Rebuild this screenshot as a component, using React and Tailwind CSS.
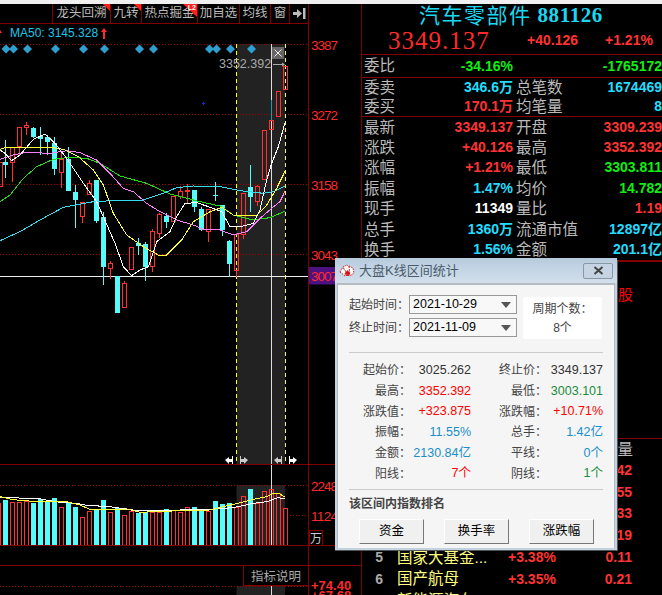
const Y = (v) => 120 + v / 3;
const VY = (v) => 440 + v / 3;
const RED = "#ff3232";
const CYAN = "#54fcfc";
const AXIS = "#ff2a2a";
const DARK = "#800000";

// [x, up, high, top, bottom, low] measured on a 3x grid
const candles = [
  [-1, 1, 125, 125, 197, 197],
  [16, 0, 60, 125, 135, 175],
  [37, 1, 80, 80, 125, 185],
  [58, 1, 22, 22, 80, 105],
  [79, 1, 5, 15, 22, 45],
  [100, 0, 22, 25, 52, 55],
  [121, 0, 20, 48, 58, 105],
  [142, 0, 45, 52, 65, 105],
  [163, 0, 50, 70, 147, 165],
  [184, 1, 100, 118, 158, 203],
  [205, 0, 80, 117, 212, 212],
  [226, 0, 195, 217, 240, 325],
  [247, 1, 245, 247, 290, 308],
  [268, 1, 180, 190, 224, 225],
  [289, 0, 180, 180, 302, 310],
  [310, 0, 275, 290, 440, 495],
  [331, 1, 422, 430, 446, 478],
  [352, 0, 467, 467, 578, 578],
  [373, 1, 483, 490, 562, 562],
  [394, 1, 380, 380, 445, 445],
  [415, 0, 355, 370, 378, 405],
  [436, 0, 365, 372, 440, 483],
  [457, 1, 328, 334, 440, 455],
  [478, 1, 280, 283, 340, 355],
  [499, 0, 280, 288, 305, 325],
  [520, 1, 228, 228, 303, 305],
  [541, 1, 198, 214, 228, 237],
  [562, 1, 192, 210, 212, 250],
  [583, 0, 210, 210, 262, 275],
  [604, 0, 262, 267, 330, 332],
  [625, 1, 268, 268, 335, 365],
  [646, 0, 186, 226, 228, 242],
  [667, 0, 256, 256, 330, 348],
  [688, 0, 360, 363, 432, 472],
  [709, 1, 340, 342, 450, 470],
  [730, 1, 220, 220, 343, 356],
  [751, 0, 135, 202, 230, 275],
  [772, 1, 195, 198, 242, 258],
  [793, 1, 30, 30, 177, 177],
  [814, 1, -60, 0, 28, 30],
  [835, 1, -87, -87, -13, -13],
  [856, 1, -162, -162, -93, -93],
];

const maLines = [
  ["#22dd11", "0,245 30,225 70,175 110,140 160,118 210,112 260,115 300,130 360,168 440,190 510,222 600,245 660,258 700,285 760,300 810,293 856,273"],
  ["#33ddf0", "0,362 60,335 120,300 190,262 280,245 340,242 430,240 490,220 530,203 580,198 660,200 720,212 790,220 820,215 856,198"],
  ["#ff80ff", "0,118 40,105 80,97 150,100 200,92 240,98 290,120 330,160 370,205 400,215 440,250 480,275 530,300 580,315 610,328 660,330 700,345 740,335 780,295 815,265 840,245 856,212"],
  ["#ffff33", "0,88 20,82 150,82 190,88 235,110 280,150 310,195 340,280 380,345 430,380 475,405 500,405 545,360 580,305 630,275 665,262 700,285 770,287 800,255 830,205 856,152"],
  ["#ffffff", "0,90 15,100 35,122 60,105 100,58 135,42 165,70 200,115 250,190 290,245 310,290 345,370 370,440 395,467 420,450 445,440 470,365 510,335 530,290 555,250 590,248 640,265 665,275 690,320 720,320 760,310 780,270 800,180 815,130 835,80 856,5"],
];

// [x, up, top]
const volumes = [
  [-5, 1, 190], [16, 0, 180], [37, 1, 187], [58, 1, 187], [79, 1, 182], [100, 0, 190], [121, 0, 178],
  [142, 0, 183], [163, 0, 175], [184, 1, 202], [205, 0, 185], [226, 0, 200], [247, 1, 232], [268, 1, 213],
  [289, 0, 207], [310, 0, 180], [331, 1, 216], [352, 0, 205], [373, 1, 226], [394, 1, 213], [415, 0, 218],
  [436, 0, 215], [457, 1, 215], [478, 1, 215], [499, 0, 207], [520, 1, 209], [541, 1, 217], [562, 1, 202],
  [583, 0, 201], [604, 0, 210], [625, 1, 212], [646, 0, 183], [667, 0, 192], [688, 0, 189], [709, 1, 202],
  [730, 1, 169], [751, 0, 147], [772, 1, 190], [793, 1, 154], [814, 1, 148], [835, 1, 160], [856, 1, 205],
];

const diamonds = [6, 13.5, 27.5, 55.5, 83.5, 104.5, 139.5, 153.5, 209.5, 216.5, 230.5, 251.5];

const toPoints = (str, f) =>
  str.split(" ").map((p) => {
    const [x, y] = p.split(",").map(Number);
    return `${x / 3},${f(y)}`;
  }).join(" ");

function Chart() {
  return (
    <svg width="361" height="571" viewBox="0 24 361 571" className="block">
      <rect x="236.5" y="44" width="48.5" height="420" fill="#222222" />
      <rect x="236.5" y="485" width="48.5" height="60" fill="#222222" />
      <rect x="236.5" y="586" width="48.5" height="9" fill="#222222" />

      {[44.5, 114.5, 184.5, 254.5, 485.5, 586.5].map((y) => (
        <line key={y} x1="0" x2="308" y1={y} y2={y} stroke="#aa0000" strokeDasharray="1 2" />
      ))}
      <line x1="290" x2="308" y1="515.5" y2="515.5" stroke="#aa0000" strokeDasharray="1 2" />

      <line x1="236.5" x2="236.5" y1="44" y2="464" stroke="#ffff33" strokeDasharray="4 3" />
      <line x1="285.5" x2="285.5" y1="44" y2="464" stroke="#ffff33" strokeDasharray="4 3" />
      <line x1="271.5" x2="271.5" y1="44" y2="545" stroke="#dddddd" />
      <line x1="271.5" x2="271.5" y1="586" y2="595" stroke="#dddddd" />
      <line x1="0" x2="308" y1="276.5" y2="276.5" stroke="#eeeeee" />

      <g shapeRendering="crispEdges">
        {candles.map(([x, up, high, top, bot, low]) => {
          const cx = Math.round(x / 3) + 0.5;
          const color = up ? RED : CYAN;
          return (
            <g key={x}>
              {high < top && <line x1={cx} x2={cx} y1={Y(high)} y2={Y(top)} stroke={x === 814 ? "#1f9aa8" : color} />}
              {low > bot && <line x1={cx} x2={cx} y1={Y(bot)} y2={Y(low)} stroke={x === 814 ? "#1f9aa8" : color} />}
              {up ? (
                <rect x={cx - 2} y={Math.round(Y(top)) + 0.5} width="4" height={Math.max(1, Math.round((bot - top) / 3))} fill="none" stroke={RED} />
              ) : (
                <rect x={cx - 2.5} y={Y(top)} width="5" height={(bot - top) / 3} fill={CYAN} />
              )}
            </g>
          );
        })}
      </g>

      {maLines.map(([color, pts]) => (
        <polyline key={color} points={toPoints(pts, Y)} fill="none" stroke={color} strokeWidth="1" shapeRendering="crispEdges" />
      ))}

      {diamonds.map((x) => (
        <polygon key={x} points={`${x - 4.5},49 ${x},44.5 ${x + 4.5},49 ${x},53.5`} fill="#2f9fd0" />
      ))}
      <path d="M203.5 102v3M202 103.5h3" stroke="#2222cc" />

      <text x="10" y="37" fontSize="12" fill="#19c8e8">MA50: 3145.328</text>
      <path d="M104 28l-3 4h2v7h2v-7h2z" fill="#ff2a2a" />
      <path d="M0 30l2 3h-2z" fill="#ff2a2a" />

      <text x="219" y="68" fontSize="12.5" fill="#aaaaaa">3352.392</text>
      <path d="M273 64.5h9" stroke="#aaaaaa" />
      <path d="M282 62.5l3 2-3 2z" fill="#aaaaaa" />
      <rect x="272" y="47" width="12" height="12" fill="#666666" />
      <path d="M274.5 49.5l7 7M281.5 49.5l-7 7" stroke="#eeeeee" />

      {[["3387", 50], ["3272", 120], ["3158", 190], ["3043", 260]].map(([t, y]) => (
        <text key={t} x="311" y={y} fontSize="13.5" fill={AXIS} textLength="27">{t}</text>
      ))}
      <rect x="309" y="267" width="30" height="17.5" fill="#4b1280" />
      <text x="311" y="281" fontSize="13.5" fill={AXIS} textLength="27">3007</text>

      <g fill="#ffffff">
        <path d="M225 460l4-3v2h3v-3h1v9h-1v-3h-3v2z" />
        <path d="M248 460l-4-3v2h-3v-3h-1v9h1v-3h3v2z" fill="#cccccc" />
        <path d="M274 460l4-3v2h3v-3h1v9h-1v-3h-3v2z" fill="#cccccc" />
        <path d="M297 460l-4-3v2h-3v-3h-1v9h1v-3h3v2z" />
      </g>

      <g shapeRendering="crispEdges">
        {volumes.map(([x, up, top]) => {
          const cx = Math.round(x / 3) + 0.5;
          return up ? (
            <rect key={x} x={cx - 2} y={Math.round(VY(top)) + 0.5} width="4" height={545 - Math.round(VY(top))} fill="none" stroke={RED} />
          ) : (
            <rect key={x} x={cx - 2.5} y={VY(top)} width="5" height={545 - VY(top)} fill={CYAN} />
          );
        })}
      </g>
      <polyline
        points={toPoints("0,173 110,175 180,187 230,190 260,196 330,200 400,210 450,212 630,208 700,203 760,190 800,185 835,173 856,177", VY)}
        fill="none" stroke="#ffffff" shapeRendering="crispEdges"
      />
      <polyline
        points={toPoints("0,170 40,179 110,185 200,185 240,195 270,208 330,210 380,207 420,217 480,214 630,210 700,193 760,178 800,170 820,160 840,162 856,172", VY)}
        fill="none" stroke="#ffff33" shapeRendering="crispEdges"
      />

      <line x1="308.5" x2="308.5" y1="24" y2="595" stroke={DARK} />
      <line x1="0" x2="361" y1="464.5" y2="464.5" stroke={DARK} />
      <line x1="0" x2="361" y1="545.5" y2="545.5" stroke={DARK} />
      <line x1="0" x2="361" y1="565.5" y2="565.5" stroke={DARK} />

      <text x="311" y="491" fontSize="13.5" fill={AXIS} textLength="27">2248</text>
      <text x="311" y="521" fontSize="13.5" fill={AXIS} textLength="27">1124</text>
      <rect x="309.5" y="530.5" width="13" height="15" fill="none" stroke={DARK} />
      <text x="310" y="543" fontSize="12" fill="#cccccc">万</text>

      <rect x="243.5" y="565.5" width="65" height="20" fill="#000000" stroke={DARK} />
      <text x="251" y="581" fontSize="12.5" fill="#aaaaaa">指标说明</text>

      <text x="311" y="590" fontSize="13" fontWeight="700" fill={AXIS}>+74.40</text>
      <text x="311" y="600" fontSize="13" fontWeight="700" fill={AXIS}>+67.68</text>
    </svg>
  );
}

const tools = [
  { label: "龙头回溯", w: "w-[58px]", flag: true },
  { label: "九转", w: "w-[31px]", flag: true },
  { label: "热点掘金", w: "w-[56px]", badge: "L2" },
  { label: "加自选", w: "w-[42px]" },
  { label: "均线", w: "w-[31px]" },
  { label: "窗", w: "w-[19px]" },
];

function Toolbar() {
  return (
    <div className="w-[309px] h-[20px] flex justify-end border-b border-r border-[#800000] bg-black">
      {tools.map((t) => (
        <div key={t.label} className={`${t.w} relative flex items-center justify-center border-l border-[#800000] overflow-hidden whitespace-nowrap text-[12.5px] text-[#bbbbbb]`}>
          {t.label}
          {t.flag && <span className="absolute top-0 right-0 w-0 h-0 border-t-[7px] border-l-[7px] border-t-[#ff1e1e] border-l-transparent" />}
          {t.badge && (
            <>
              <span className="absolute top-0 right-0 w-0 h-0 border-t-[13px] border-l-[14px] border-t-[#ff1e1e] border-l-transparent" />
              <span className="absolute top-0 right-[1px] text-white text-[7px] leading-[8px] font-bold">{t.badge}</span>
            </>
          )}
        </div>
      ))}
      <div className="w-[19px] flex items-center justify-center border-l border-[#800000]">
        <svg width="13" height="11" viewBox="0 0 13 11">
          <path d="M0 4h4V1l5 4.5L4 10V7H0z" fill="#bbbbbb" />
          <rect x="10" y="0" width="2.5" height="11" fill="#bbbbbb" />
        </svg>
      </div>
    </div>
  );
}

const GREEN = "text-[#11ee11]";
const RD = "text-[#ff3333]";
const CY = "text-[#22ddff]";
const WH = "text-white";

const quoteTop = [
  ["委卖", "346.6万", CY, "总笔数", "1674469", CY],
  ["委买", "170.1万", RD, "均笔量", "8", CY],
];
const quoteRows = [
  ["最新", "3349.137", RD, "开盘", "3309.239", RD],
  ["涨跌", "+40.126", RD, "最高", "3352.392", RD],
  ["涨幅", "+1.21%", RD, "最低", "3303.811", GREEN],
  ["振幅", "1.47%", CY, "均价", "14.782", GREEN],
  ["现手", "11349", WH, "量比", "1.19", RD],
  ["总手", "1360万", CY, "流通市值", "12897亿", CY],
  ["换手", "1.56%", CY, "金额", "201.1亿", CY],
];

function QuoteRow({ row, h }) {
  const [a, av, ac, b, bv, bc] = row;
  return (
    <div className={`flex items-center ${h} pl-[2px] whitespace-nowrap`}>
      <span className="w-[50px] text-[15.5px] text-[#bbbbbb]">{a}</span>
      <span className={`w-[99px] text-right text-[14px] font-bold ${ac}`}>{av}</span>
      <span className="ml-[3px] text-[15.5px] text-[#bbbbbb]">{b}</span>
      <span className={`ml-auto text-[14px] font-bold ${bc}`}>{bv}</span>
    </div>
  );
}

const ranks = [
  { vol: "42" },
  { vol: "55" },
  { vol: "33" },
  { vol: "19" },
  { n: "5", name: "国家大基金...", pct: "+3.38%", vol: "0.11" },
  { n: "6", name: "国产航母", pct: "+3.35%", vol: "0.21" },
  { n: "7", name: "新能源汽车...", pct: "", vol: "" },
];

function RightPanel() {
  return (
    <div className="w-[301px] h-[591px] overflow-hidden border-l border-[#800000] bg-black">
      <div className="h-[23px] flex items-center justify-center gap-[6px] pr-[2px] text-[#19d8f0] whitespace-nowrap">
        <span className="text-[21px] leading-[23px] tracking-[1.5px]">汽车零部件</span>
        <span className="text-[21px] font-bold font-['Liberation_Serif',serif] tracking-[0.6px]">881126</span>
      </div>
      <div className="h-[28px] border-b border-[#800000] flex items-center whitespace-nowrap">
        <span className="ml-[26px] w-[139px] text-[25px] font-['Liberation_Serif',serif] text-[#ff2a2a] tracking-[1px]">3349.137</span>
        <span className="text-[14px] font-bold text-[#ff3333]">+40.126</span>
        <span className="ml-[27px] text-[14px] font-bold text-[#ff3333]">+1.21%</span>
      </div>
      <div className="border-b border-[#800000]">
        <QuoteRow row={["委比", "-34.16%", GREEN, "", "-1765172", GREEN]} h="h-[22px]" />
      </div>
      <div className="border-b border-[#800000]">
        {quoteTop.map((r) => <QuoteRow key={r[0]} row={r} h="h-[19px]" />)}
      </div>
      <div className="border-b-[2px] border-[#800000]">
        {quoteRows.map((r) => <QuoteRow key={r[0]} row={r} h="h-[20.4px]" />)}
      </div>
      <div className="h-[68px] flex items-center justify-end pr-[29px] text-[15px] text-[#ff0000]">股</div>
      <div className="h-[108px]" />
      <div className="border-t border-[#800000] h-[22px] flex items-center justify-end pr-[29px] text-[15.5px] text-[#bbbbbb]">量</div>
      {ranks.map((r, i) => (
        <div key={i} className="h-[21.7px] flex items-center whitespace-nowrap">
          <span className="w-[21px] text-right text-[14px] font-bold text-[#aaaaaa]">{r.n}</span>
          <span className="ml-[14px] w-[111px] text-[15.5px] text-[#ffff80]">{r.name}</span>
          <span className="w-[51px] text-[14px] font-bold text-[#ff3333]">{r.pct}</span>
          <span className="w-[73px] text-right text-[14px] font-bold text-[#ff3333]">{r.vol}</span>
        </div>
      ))}
    </div>
  );
}

const BLK = "text-[#333333]";
const R2 = "text-[#ff0000]";
const G2 = "text-[#1a8c3c]";
const B2 = "text-[#1a8fc8]";

const stats = [
  ["起始价", "3025.262", BLK, "终止价", "3349.137", BLK],
  ["最高", "3352.392", R2, "最低", "3003.101", G2],
  ["涨跌值", "+323.875", R2, "涨跌幅", "+10.71%", R2],
  ["振幅", "11.55%", B2, "总手", "1.42亿", B2],
  ["金额", "2130.84亿", B2, "平线", "0个", B2],
  ["阳线", "7个", R2, "阴线", "1个", G2],
];

function DateSelect({ value }) {
  return (
    <div className="w-[108px] h-[19px] flex items-center justify-between pl-[3px] pr-[5px] border border-[#999999] bg-[#f8f8f8]">
      <span className="text-[12.5px] text-black">{value}</span>
      <span className="w-0 h-0 border-x-[5px] border-x-transparent border-t-[6px] border-t-[#555555]" />
    </div>
  );
}

function Dialog() {
  return (
    <div className="absolute left-[335px] top-[258px] w-[283px] h-[293px] flex flex-col rounded-t-[4px] border-r border-b border-[#555555] bg-[#c3d2e0] text-[12px] text-[#444444]">
      <div className="h-[25px] shrink-0 flex items-center pl-[4px] pr-[4px] bg-gradient-to-b from-[#b7cbde] to-[#d3e0ec]">
        <svg width="16" height="14" viewBox="0 0 16 14">
          <path d="M1 8l2-4 4 2-1 6z" fill="#ffffff" stroke="#d82020" strokeWidth="1" strokeDasharray="1.5 1" />
          <path d="M4 3l4-2 3 3-2 7z" fill="#ffffff" stroke="#d82020" strokeWidth="1" strokeDasharray="1.5 1" />
          <path d="M10 2l4 2 1 5-4 3z" fill="#ffffff" stroke="#d82020" strokeWidth="1" strokeDasharray="1.5 1" />
          <path d="M8.5 6l3 4h-2l.5 2H7l.5-2h-2z" fill="#d01818" />
        </svg>
        <span className="ml-[4px] text-[13px] text-[#4a5a6a]">大盘K线区间统计</span>
        <div className="ml-auto w-[30px] h-[16px] flex items-center justify-center rounded-[2px] border border-[#8a97a5] bg-[#c5d3e2]">
          <svg width="11" height="9" viewBox="0 0 11 9">
            <path d="M1.5 1l8 7M9.5 1l-8 7" stroke="#444444" strokeWidth="2" />
          </svg>
        </div>
      </div>
      <div className="flex-1 mx-[2px] mb-[2px] px-[11px] border-t-[2px] border-x border-[#b5bcc4] bg-[#f5f5f5]">
        <div className="flex h-[67px] pt-[10px] gap-[6px]">
          <div className="flex flex-col gap-[4px]">
            <div className="flex items-center h-[19px]">
              <span className="w-[60px]">起始时间：</span>
              <DateSelect value="2021-10-29" />
            </div>
            <div className="flex items-center h-[19px]">
              <span className="w-[60px]">终止时间：</span>
              <DateSelect value="2021-11-09" />
            </div>
          </div>
          <div className="w-[79px] h-[42px] mt-[2px] flex flex-col items-center justify-center gap-[1px] rounded-[2px] bg-white">
            <span>周期个数：</span>
            <span>8个</span>
          </div>
        </div>
        <div className="border-t border-[#cccccc] pt-[7px] pb-[5px]">
          {stats.map(([a, av, ac, b, bv, bc]) => (
            <div key={a} className="h-[20.7px] flex items-center whitespace-nowrap">
              <span className="w-[62px] text-right">{a}：</span>
              <span className={`w-[60px] text-right text-[12.5px] ${ac}`}>{av}</span>
              <span className="w-[76px] text-right">{b}：</span>
              <span className={`w-[56px] text-right text-[12.5px] ${bc}`}>{bv}</span>
            </div>
          ))}
        </div>
        <div className="border-t border-[#cccccc] pt-[5px] font-bold">该区间内指数排名</div>
        <div className="mt-[6px] pl-[10px] flex gap-[20px]">
          {["资金", "换手率", "涨跌幅"].map((b) => (
            <button key={b} className="w-[65px] h-[25px] border border-t-white border-l-white border-r-[#777777] border-b-[#777777] bg-[#f0f0f0] text-[12.5px] text-black">{b}</button>
          ))}
        </div>
      </div>
    </div>
  );
}

export default function App() {
  return (
    <div className="relative w-[662px] h-[595px] overflow-hidden bg-black font-['Liberation_Sans','Noto_Sans_CJK_SC',sans-serif]">
      <div className="h-[4px] bg-[#f0f0f0]" />
      <div className="flex h-[591px]">
        <div className="w-[361px] overflow-hidden">
          <Toolbar />
          <Chart />
        </div>
        <RightPanel />
      </div>
      <Dialog />
    </div>
  );
}
